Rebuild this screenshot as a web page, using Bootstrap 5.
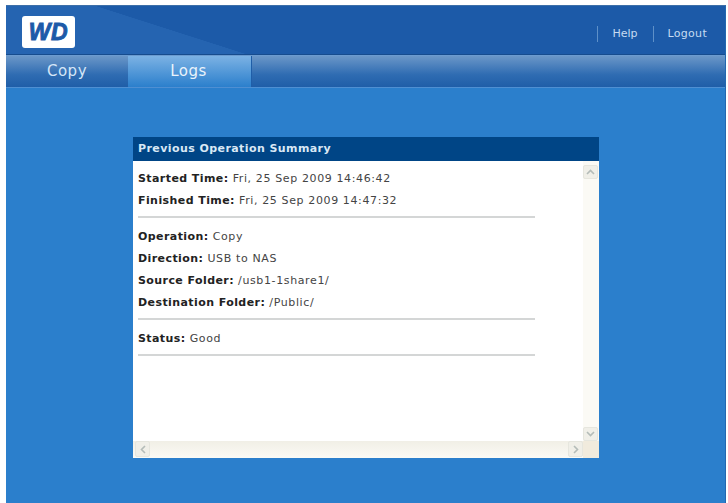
<!DOCTYPE html>
<html lang="en">
<head>
<meta charset="utf-8">
<title>WD Logs</title>
<link href="https://cdn.jsdelivr.net/npm/bootstrap@5.3.0/dist/css/bootstrap.min.css" rel="stylesheet">
<style>
html,body{height:100%;overflow:hidden;background:#fff;}
body{font-family:"DejaVu Sans",Verdana,sans-serif;font-size:11px;color:#444;}
.wd-frame{margin:5px 2px 0 6px;height:498px;background:#2b7fcc;border-top:1px solid #3d6fa8;border-right:1px solid #2268b0;}
.wd-head{height:49px;padding:0 18px 0 16px;border-bottom:1px solid #164c8e;
 background-color:#1c5aa8;
 background-image:linear-gradient(to top right,#2564b1 50%,transparent 50.5%),linear-gradient(#2564b1,#2564b1);
 background-size:156px 50px,90px 50px;background-position:89px 0,0 0;background-repeat:no-repeat;}
.wd-logo{width:53px;height:32px;background:#fff;border-radius:3px;color:#1d5aa8;font:italic 900 23px/32px "Liberation Sans",Arial,sans-serif;-webkit-text-stroke:.9px #1d5aa8;letter-spacing:.5px;text-align:center;transform:translateY(2px);}
.wd-links{color:#c6dcf2;font-size:11px;padding-top:7px;}
.wd-links span{height:16px;line-height:16px;padding-left:14px;border-left:1px solid #5e90c8;}
.wd-links .wd-gap{margin-left:15px;letter-spacing:.3px;}
.wd-tabs{height:33px;background:linear-gradient(#6b97c8,#2f6cb2 60%,#1f5ea8);border-top:1px solid #6b9bd0;border-bottom:1px solid #4f8fd2;}
.wd-tab{width:122px;color:#d5e6f7;font-size:15px;letter-spacing:.5px;line-height:31px;text-align:center;}
.wd-tab-on{width:124px;padding-right:2px;background:linear-gradient(#7cb2e4,#2b7fcc);color:#eaf3fb;border-right:1px solid #1f5ea8;}
.wd-panel{width:466px;height:321px;margin:49px 0 0 127px;background:#fff;display:flex;flex-direction:column;}
.wd-title{height:24px;background:#004586;color:#d9e8f5;font-weight:700;letter-spacing:.42px;line-height:24px;padding-left:5px;flex:none;}
.wd-body{flex:1;min-height:0;display:flex;}
.wd-text{flex:1;padding:7px 0 0 5px;}
.wd-text p{margin:0;height:22px;line-height:22px;font-size:11px;letter-spacing:.62px;}
.wd-text b{font-weight:700;color:#222;letter-spacing:.42px;}
.wd-rule{width:397px;height:2px;background:#d4d6d6;margin:4px 0 8px 0;}
.wd-vbar{width:16px;background:#fbfaf5;display:flex;flex-direction:column;justify-content:space-between;padding:4px 1px 0 0;}
.wd-hbar{height:17px;background:linear-gradient(#f1efe6,#fbfaf5);display:flex;justify-content:space-between;flex:none;}
.wd-btn{width:15px;height:14px;background:#f0efe8;border:1px solid #e6e6de;border-radius:2px;display:flex;align-items:center;justify-content:center;}
.wd-hbtn{height:16px;margin-left:2px;}
.wd-corner{width:16px;height:17px;background:#f1ebdd;}
</style>
</head>
<body>
<div class="wd-frame">
  <div class="wd-head d-flex align-items-center justify-content-between">
    <div class="wd-logo">WD</div>
    <div class="wd-links d-flex align-items-center"><span>Help</span><span class="wd-gap">Logout</span></div>
  </div>
  <div class="wd-tabs d-flex">
    <div class="wd-tab">Copy</div>
    <div class="wd-tab wd-tab-on">Logs</div>
  </div>
  <div class="wd-panel">
    <div class="wd-title">Previous Operation Summary</div>
    <div class="wd-body">
      <div class="wd-text">
        <p><b>Started Time:</b> Fri, 25 Sep 2009 14:46:42</p>
        <p><b>Finished Time:</b> Fri, 25 Sep 2009 14:47:32</p>
        <div class="wd-rule"></div>
        <p><b>Operation:</b> Copy</p>
        <p><b>Direction:</b> USB to NAS</p>
        <p><b>Source Folder:</b> /usb1-1share1/</p>
        <p><b>Destination Folder:</b> /Public/</p>
        <div class="wd-rule"></div>
        <p><b>Status:</b> Good</p>
        <div class="wd-rule"></div>
      </div>
      <div class="wd-vbar">
        <div class="wd-btn"><svg width="9" height="6" viewBox="0 0 9 6"><path d="M1 5 4.500 1.500 8 5" fill="none" stroke="#b4bcb8" stroke-width="1.600"/></svg></div>
        <div class="wd-btn"><svg width="9" height="6" viewBox="0 0 9 6"><path d="M1 1 4.500 4.500 8 1" fill="none" stroke="#b4bcb8" stroke-width="1.600"/></svg></div>
      </div>
    </div>
    <div class="wd-hbar">
      <div class="wd-btn wd-hbtn"><svg width="6" height="9" viewBox="0 0 6 9"><path d="M5 1 1.500 4.500 5 8" fill="none" stroke="#b4bcb8" stroke-width="1.600"/></svg></div>
      <div class="d-flex">
        <div class="wd-btn wd-hbtn"><svg width="6" height="9" viewBox="0 0 6 9"><path d="M1 1 4.500 4.500 1 8" fill="none" stroke="#b4bcb8" stroke-width="1.600"/></svg></div>
        <div class="wd-corner"></div>
      </div>
    </div>
  </div>
</div>
<script src="https://cdn.jsdelivr.net/npm/bootstrap@5.3.0/dist/js/bootstrap.bundle.min.js"></script>
</body>
</html>
